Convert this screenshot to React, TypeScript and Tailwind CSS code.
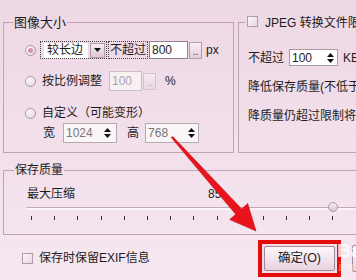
import React from "react";

const FONT = "font-['Liberation_Sans','Noto_Sans_CJK_SC',sans-serif]";

function Radio({ checked = false }: { checked?: boolean }) {
  return (
    <span className="w-[11px] h-[11px] rounded-full border border-[#a8929f] bg-gradient-to-br from-white to-[#e6d6e0] flex items-center justify-center shrink-0">
      {checked && <span className="w-[5px] h-[5px] rounded-full bg-[#dc8cb8]" />}
    </span>
  );
}

function Check() {
  return (
    <span className="block w-[11px] h-[11px] border border-[#b39aa9] bg-gradient-to-br from-[#fbf6f9] to-[#e8d6e1] shrink-0" />
  );
}

function Spin() {
  return (
    <span className="flex flex-col items-center justify-center w-[11px] gap-[2px] shrink-0">
      <svg width="7" height="4" viewBox="0 0 7 4">
        <path d="M0 4L3.5 0L7 4Z" fill="#111" />
      </svg>
      <svg width="7" height="4" viewBox="0 0 7 4">
        <path d="M0 0L3.5 4L7 0Z" fill="#111" />
      </svg>
    </span>
  );
}

function DotsButton({ disabled = false }: { disabled?: boolean }) {
  return (
    <span
      className={`w-[13px] h-[17px] border flex items-end justify-center pb-[1px] text-[10px] leading-none shrink-0 bg-gradient-to-b ${
        disabled
          ? "border-[#d2c2cc] from-[#f4eaf0] to-[#ead9e3] text-[#b8a8b2]"
          : "border-[#b49cab] from-[#f9eff5] to-[#e3ccda] text-[#333]"
      }`}
    >
      ..
    </span>
  );
}

export default function App() {
  const ticks = Array.from({ length: 15 });
  return (
    <div
      className={`${FONT} relative w-[356px] h-[280px] overflow-hidden bg-gradient-to-b from-[#eed8e5] to-[#f5e7f0] text-[12px] text-[#1c1c1c] flex flex-col`}
    >
      {/* top groups */}
      <div className="flex mt-[15px] shrink-0">
        <fieldset className="ml-[3px] w-[231px] h-[138px] border border-[#c2a3b6] pl-[9px] shrink-0">
          <legend className="px-[1px] text-[13px] leading-[15px]">图像大小</legend>

          <div className="flex items-center h-[18px] mt-[11px]">
            <span className="ml-[12px]">
              <Radio checked />
            </span>
            <span className="ml-[4px] h-[18px] border border-dotted border-[#444] flex items-center pl-[3px] pr-[1px]">
              <span className="w-[44px] h-[15px] bg-white flex items-center pl-[3px] leading-none">较长边</span>
              <span className="ml-[2px] w-[15px] h-[15px] border border-[#b09aa8] bg-gradient-to-b from-[#f6ecf2] to-[#dfc8d6] flex items-center justify-center">
                <svg width="7" height="4" viewBox="0 0 7 4">
                  <path d="M0 0L3.5 4L7 0Z" fill="#111" />
                </svg>
              </span>
            </span>
            <span className="ml-[1px] h-[18px] border border-dotted border-[#444] flex items-center px-[1px] leading-none">
              不超过
            </span>
            <span className="ml-[1px] w-[39px] h-[18px] border border-[#8f8490] bg-white flex items-center pl-[2px] leading-none">
              800
            </span>
            <span className="ml-[1px]">
              <DotsButton />
            </span>
            <span className="ml-[4px] leading-none">px</span>
          </div>

          <div className="flex items-center h-[20px] mt-[12px]">
            <span className="ml-[12px]">
              <Radio />
            </span>
            <span className="ml-[6px] leading-none">按比例调整</span>
            <span className="ml-[7px] w-[33px] h-[20px] border border-[#cbbdc6] bg-[#f7f1f4] flex items-center pl-[2px] leading-none text-[#a9a3a7]">
              100
            </span>
            <span className="ml-[1px]">
              <DotsButton disabled />
            </span>
            <span className="ml-[9px] leading-none">%</span>
          </div>

          <div className="flex items-center h-[16px] mt-[14px]">
            <span className="ml-[12px]">
              <Radio />
            </span>
            <span className="ml-[6px] leading-none">自定义（可能变形）</span>
          </div>

          <div className="flex items-center h-[20px] mt-[2px]">
            <span className="ml-[30px] leading-none">宽</span>
            <span className="ml-[8px] w-[54px] h-[20px] border border-[#b8a8b2] bg-[#faf6f8] flex items-center justify-between pl-[2px] pr-[3px] leading-none text-[#777]">
              1024
              <Spin />
            </span>
            <span className="ml-[10px] leading-none">高</span>
            <span className="ml-[6px] w-[54px] h-[20px] border border-[#b8a8b2] bg-[#faf6f8] flex items-center justify-between pl-[2px] pr-[1px] leading-none text-[#777]">
              768
              <Spin />
            </span>
          </div>
        </fieldset>

        <fieldset className="ml-[4px] w-[140px] h-[138px] border border-[#c2a3b6] pl-[6px] shrink-0">
          <legend className="px-[2px] leading-[15px]">
            <span className="flex items-center h-[15px]">
              <span className="-mt-[3px]">
                <Check />
              </span>
              <span className="ml-[7px] leading-none whitespace-nowrap">JPEG 转换文件限制</span>
            </span>
          </legend>

          <div className="flex items-center h-[17px] mt-[19px]">
            <span className="ml-[3px] leading-none">不超过</span>
            <span className="ml-[5px] w-[49px] h-[17px] border border-[#a99aa4] bg-white flex items-center justify-between pl-[2px] pr-[1px] leading-none">
              100
              <Spin />
            </span>
            <span className="ml-[5px] leading-none">KB</span>
          </div>
          <div className="h-[15px] mt-[14px] ml-[3px] leading-[15px] whitespace-nowrap">降低保存质量(不低于</div>
          <div className="h-[15px] mt-[14px] ml-[3px] leading-[15px] whitespace-nowrap">降质量仍超过限制将</div>
        </fieldset>
      </div>

      {/* quality group */}
      <fieldset className="ml-[3px] mt-[10px] w-[370px] h-[72px] border border-[#c2a3b6] pl-[10px] shrink-0">
        <legend className="px-[1px] leading-[15px]">保存质量</legend>
        <div className="flex items-center h-[15px] mt-[8px] ml-[13px]">
          <span className="w-[181px] leading-none">最大压缩</span>
          <span className="leading-none">85</span>
        </div>
        <div className="relative ml-[13px] mt-[6px] h-[3px] border-t border-[#c7a8bb] bg-[#fbf4f8]">
          <span className="absolute left-[301px] -top-[6px] w-[10px] h-[10px] rounded-full border border-[#a898ac] bg-gradient-to-b from-[#f4ecf4] to-[#d6c6da]" />
        </div>
        <div className="flex ml-[17px] mt-[6px] gap-[22.2px]">
          {ticks.map((_, i) => (
            <span key={i} className="w-[1px] h-[4px] bg-[#333] shrink-0" />
          ))}
        </div>
      </fieldset>

      {/* bottom row */}
      <div className="flex items-center h-[40px] mt-[3px] shrink-0">
        <div className="w-[258px] pl-[22px] flex items-center shrink-0">
          <Check />
          <span className="ml-[6px] leading-none">保存时保留EXIF信息</span>
        </div>
        <div className="w-[83px] h-[37px] border-[4px] border-[#e40b0b] p-[2px] shrink-0 bg-[#f3dbe7]">
          <button className="w-full h-full border border-[#9c8a96] rounded-[2px] bg-gradient-to-b from-[#fdf8fb] to-[#e9d2df] flex items-center justify-center leading-none text-[12.5px]">
            确定(O)
          </button>
        </div>
        <span className="ml-[11px] w-[70px] h-[27px] border border-[#9c8a96] rounded-[2px] bg-gradient-to-b from-[#fdf8fb] to-[#e9d2df] shrink-0" />
      </div>

      {/* watermark */}
      <span className="absolute left-[337px] top-[241px] text-[19px] font-bold leading-none text-white/80">Bai</span>
      <span className="absolute left-[339px] top-[262px] text-[9px] leading-none text-white/70">jing</span>

      {/* red annotation arrow */}
      <svg className="absolute left-0 top-0 pointer-events-none" width="356" height="280" viewBox="0 0 356 280">
        <polygon
          points="171.3,137.6 172.7,136.4 241.7,208.9 247.7,203.6 256,231 229.7,219.6 235.7,214.3"
          fill="#e8141b"
          stroke="#c40d12"
          strokeWidth="0.6"
          strokeLinejoin="round"
        />
      </svg>
    </div>
  );
}
